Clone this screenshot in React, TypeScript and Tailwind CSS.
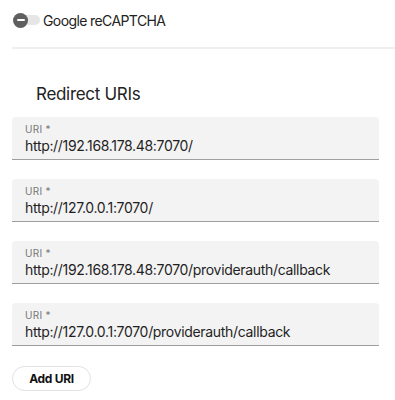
import React from "react";

const uris = [
  "http://192.168.178.48:7070/",
  "http://127.0.0.1:7070/",
  "http://192.168.178.48:7070/providerauth/callback",
  "http://127.0.0.1:7070/providerauth/callback",
];

const UriField: React.FC<{ value: string }> = ({ value }) => (
  <div className="h-[43px] w-[367px] bg-[#f3f3f3] rounded-t border-b border-[#9e9e9e] px-[13px] pt-[6px]">
    <div className="text-[10px] leading-[12px] text-[#777] tracking-wide">URI *</div>
    <div className="text-[14px] leading-[20px] tracking-[-0.32px] text-[#1f1f1f] mt-[1px]">{value}</div>
  </div>
);

export default function App() {
  return (
    <div className="w-[395px] h-[400px] bg-white font-['Inter',sans-serif] overflow-hidden">
      <div className="flex items-center h-[40px] pl-[13px]">
        <div className="relative w-[27px] h-[16px] flex items-center">
          <div className="absolute left-[2px] right-0 h-[10px] rounded-full bg-[#e6e6e6]" />
          <div className="absolute left-0 w-[15px] h-[15px] rounded-full bg-[#5f5f5f] flex items-center justify-center">
            <div className="w-[8px] h-[2px] bg-white rounded" />
          </div>
        </div>
        <span className="ml-[3px] text-[14px] tracking-[-0.6px] text-[#222]">Google reCAPTCHA</span>
      </div>
      <div className="ml-3 mt-[7px] h-[2px] bg-[#efefef]" />

      <div className="pl-3">
        <h2 className="ml-6 mt-[33px] text-[17px] leading-[24px] tracking-[-0.3px] text-[#222]">Redirect URIs</h2>
        <div className="mt-[11px] flex flex-col gap-[19px]">
          {uris.map((u) => (
            <UriField key={u} value={u} />
          ))}
        </div>
        <button className="mt-[20px] h-[25px] w-[79px] rounded-full border border-[#e2e2e2] bg-white text-[12px] tracking-[-0.3px] font-bold text-[#111]">
          Add URI
        </button>
      </div>
    </div>
  );
}
